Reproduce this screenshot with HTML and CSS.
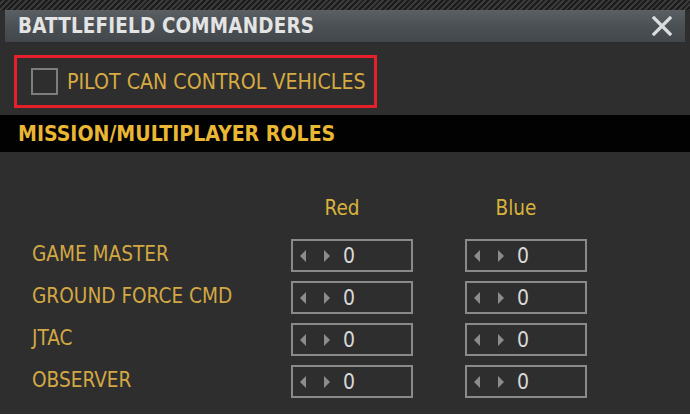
FILE: index.html
```html
<!DOCTYPE html>
<html>
<head>
<meta charset="utf-8">
<link rel="stylesheet" href="styles.css">
</head>
<body>
<div class="window">
  <div class="hatch"></div>
  <div class="titlebar">
    <span class="title">BATTLEFIELD COMMANDERS</span>
    <svg class="close" width="22" height="20" viewBox="0 0 22 20"><path d="M3 2 L19 18 M19 2 L3 18" stroke="#dcdcdc" stroke-width="3.2" stroke-linecap="square"/></svg>
  </div>
  <div class="option-wrap">
    <div class="option">
      <span class="checkbox"></span>
      <span class="option-label">PILOT CAN CONTROL VEHICLES</span>
    </div>
  </div>
  <div class="section-header">MISSION/MULTIPLAYER ROLES</div>
  <div class="roles">
    <div></div>
    <div class="col-head">Red</div>
    <div class="col-head">Blue</div>

    <div class="label">GAME MASTER</div>
    <div class="spin"><span class="arr left"></span><span class="arr right"></span><span class="val">0</span></div>
    <div class="spin"><span class="arr left"></span><span class="arr right"></span><span class="val">0</span></div>

    <div class="label">GROUND FORCE CMD</div>
    <div class="spin"><span class="arr left"></span><span class="arr right"></span><span class="val">0</span></div>
    <div class="spin"><span class="arr left"></span><span class="arr right"></span><span class="val">0</span></div>

    <div class="label">JTAC</div>
    <div class="spin"><span class="arr left"></span><span class="arr right"></span><span class="val">0</span></div>
    <div class="spin"><span class="arr left"></span><span class="arr right"></span><span class="val">0</span></div>

    <div class="label">OBSERVER</div>
    <div class="spin"><span class="arr left"></span><span class="arr right"></span><span class="val">0</span></div>
    <div class="spin"><span class="arr left"></span><span class="arr right"></span><span class="val">0</span></div>
  </div>
</div>
</body>
</html>
```

FILE: styles.css
```css
html, body {
  margin: 0;
  padding: 0;
  background: #ffffff;
}
body {
  font-family: "DejaVu Sans Condensed", "DejaVu Sans", sans-serif;
}
.window {
  width: 690px;
  height: 414px;
  background: #2e2e2e;
  overflow: hidden;
}
.hatch {
  height: 10px;
  background: repeating-linear-gradient(135deg, #1c1c1c 0 2px, #3a3a3a 2px 4px);
}
.titlebar {
  margin: 0 5px;
  height: 33px;
  background: linear-gradient(#5b6064, #4b5054 50%, #43474b);
  border-bottom: 1px solid #2a2c2e;
  box-sizing: border-box;
  display: flex;
  align-items: center;
  justify-content: space-between;
  padding: 0 12px 0 13px;
}
.title {
  color: #e4e4e4;
  font-weight: bold;
  font-size: 20.4px;
  letter-spacing: 0.2px;
}
.close {
  display: block;
}
.option-wrap {
  padding: 12px 0 0 14px;
}
.option {
  width: 363px;
  height: 53px;
  box-sizing: border-box;
  border: 3px solid #e5202a;
  display: flex;
  align-items: center;
  padding-left: 14px;
}
.checkbox {
  width: 23px;
  height: 23px;
  border: 2px solid #7d7d7d;
  flex: none;
}
.option-label {
  color: #d7ab42;
  font-size: 21.2px;
  margin-left: 9px;
}
.section-header {
  margin-top: 7px;
  height: 37px;
  background: #020202;
  color: #e9b733;
  font-weight: bold;
  font-size: 21.1px;
  display: flex;
  align-items: center;
  padding-left: 18px;
}
.roles {
  display: grid;
  grid-template-columns: 207px 122px 122px;
  column-gap: 52px;
  row-gap: 9px;
  padding: 44px 0 0 32px;
  align-items: center;
}
.col-head {
  color: #d8b23c;
  font-size: 20.5px;
  text-align: center;
  padding-right: 20px;
  margin-bottom: 10px;
}
.label {
  color: #d3a844;
  font-size: 20.6px;
  padding-bottom: 4px;
  white-space: nowrap;
}
.spin {
  height: 33px;
  box-sizing: border-box;
  border: 2px solid #8a8a8a;
  display: flex;
  align-items: center;
  padding-left: 7px;
}
.arr {
  width: 0;
  height: 0;
  border-top: 6px solid transparent;
  border-bottom: 6px solid transparent;
}
.arr.left {
  border-right: 6px solid #8c8c8c;
}
.arr.right {
  border-left: 6px solid #8c8c8c;
  margin-left: 18px;
}
.val {
  color: #d8d8d8;
  font-size: 21px;
  margin-left: 13px;
}
```
